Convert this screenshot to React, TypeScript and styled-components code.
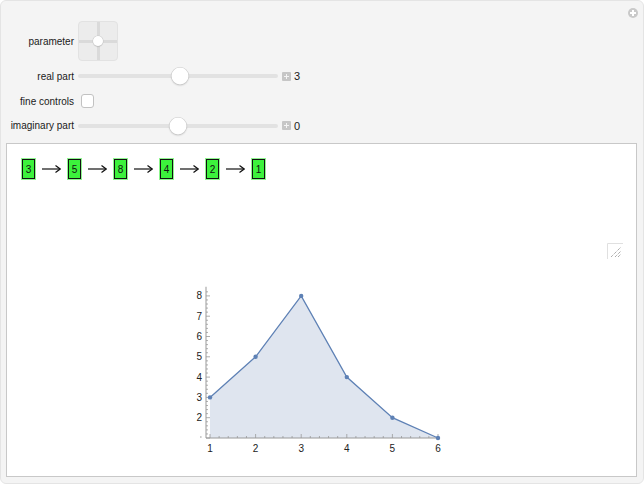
import { createGlobalStyle } from "styled-components";
import styled from "styled-components";

const GlobalStyle = createGlobalStyle`
  html, body {
    margin: 0;
    padding: 0;
    background: #ffffff;
  }
  body {
    font-family: "Liberation Sans", Arial, sans-serif;
    font-size: 11px;
    color: #1a1a1a;
  }
`;

const sequence = [3, 5, 8, 4, 2, 1];
const points: [number, number][] = [
  [1, 3],
  [2, 5],
  [3, 8],
  [4, 4],
  [5, 2],
  [6, 1],
];

// plot mapping (svg local coordinates)
const px = (u: number) => 25 + (u - 1) * 45.6;
const py = (v: number) => 153 - (v - 1) * 20.3;

const Panel = styled.div`
  width: 644px;
  height: 484px;
  box-sizing: border-box;
  background: #f4f4f4;
  border: 1px solid #e4e4e4;
  border-radius: 6px;
  display: flex;
  flex-direction: column;
`;

const TopBar = styled.div`
  display: flex;
  justify-content: flex-end;
  padding: 7px 5px 0 0;
  height: 13px;
`;

const CornerButton = styled.div`
  width: 10px;
  height: 10px;
  border-radius: 50%;
  background: #c9c9c9;
  position: relative;
  &::before,
  &::after {
    content: "";
    position: absolute;
    background: #fff;
  }
  &::before {
    left: 2px;
    top: 4px;
    width: 6px;
    height: 2px;
  }
  &::after {
    left: 4px;
    top: 2px;
    width: 2px;
    height: 6px;
  }
`;

const Controls = styled.div`
  display: grid;
  grid-template-columns: 73px auto;
  grid-template-rows: 40px 20px 20px 19px;
  column-gap: 4px;
  row-gap: 5px;
  align-items: center;
`;

const Label = styled.div`
  text-align: right;
  font-size: 10px;
  white-space: nowrap;
`;

const Pad = styled.div`
  width: 40px;
  height: 40px;
  box-sizing: border-box;
  border-radius: 4px;
  background: #ececec;
  border: 1px solid #e2e2e2;
  position: relative;
  &::before {
    content: "";
    position: absolute;
    left: 18px;
    top: 0;
    width: 3px;
    height: 38px;
    background: #dadada;
  }
  &::after {
    content: "";
    position: absolute;
    top: 18px;
    left: 0;
    height: 3px;
    width: 38px;
    background: #dadada;
  }
`;

const PadThumb = styled.div`
  position: absolute;
  left: 14px;
  top: 14px;
  width: 10px;
  height: 10px;
  border-radius: 50%;
  background: #fff;
  box-shadow: 0 0 0 0.5px #c8c8c8, 0 1px 1px rgba(0, 0, 0, 0.15);
  z-index: 1;
`;

const SliderRow = styled.div`
  display: flex;
  align-items: center;
`;

const Track = styled.div`
  width: 200px;
  height: 4px;
  border-radius: 2px;
  background: #e2e2e2;
  position: relative;
`;

const Thumb = styled.div<{ $pos: number }>`
  position: absolute;
  top: 50%;
  left: ${(p) => p.$pos * 100}%;
  width: 17px;
  height: 17px;
  border-radius: 50%;
  background: #fff;
  transform: translate(-50%, -50%);
  box-shadow: 0 0 0 0.5px #c4c4c4, 0 1px 2px rgba(0, 0, 0, 0.2);
`;

const PlusBox = styled.div`
  width: 9px;
  height: 9px;
  margin-left: 4px;
  background: #c6c6c6;
  border-radius: 1px;
  position: relative;
  &::before,
  &::after {
    content: "";
    position: absolute;
    background: #f4f4f4;
  }
  &::before {
    left: 2px;
    top: 4px;
    width: 5px;
    height: 1px;
  }
  &::after {
    left: 4px;
    top: 2px;
    width: 1px;
    height: 5px;
  }
`;

const Value = styled.span`
  margin-left: 3px;
  font-size: 11px;
`;

const Checkbox = styled.div`
  width: 13px;
  height: 14px;
  margin-left: 3px;
  box-sizing: border-box;
  border: 1px solid #c2c2c2;
  border-radius: 3px;
  background: #fff;
`;

const Output = styled.div`
  margin: 8px 6px 0 5px;
  height: 334px;
  box-sizing: border-box;
  background: #fff;
  border: 1px solid #c8c8c8;
  padding: 14px 13px 0 15px;
  display: flex;
  flex-direction: column;
`;

const Sequence = styled.div`
  display: flex;
  align-items: center;
  gap: 7px;
  height: 22px;
`;

const Step = styled.div`
  display: flex;
  align-items: center;
  gap: 7px;
`;

const Cell = styled.div`
  width: 13px;
  height: 20px;
  box-sizing: border-box;
  border: 1px solid #111;
  background: #3cf23c;
  box-shadow: 0 0 0 1px #8ef58e;
  display: flex;
  align-items: center;
  justify-content: center;
  font-size: 10px;
  color: #111;
`;

const ResizeRow = styled.div`
  display: flex;
  justify-content: flex-end;
  margin-top: 63px;
  height: 16px;
`;

const PlotWrap = styled.div`
  margin-top: 26px;
  margin-left: 163px;
`;

function Arrow() {
  return (
    <svg width="19" height="10" viewBox="0 0 19 10">
      <line x1="0" y1="5" x2="18" y2="5" stroke="#111" strokeWidth="1.2" />
      <path d="M13.5 1.5 L18.2 5 L13.5 8.5" fill="none" stroke="#111" strokeWidth="1.2" />
    </svg>
  );
}

function ResizeIcon() {
  return (
    <svg width="16" height="16" viewBox="0 0 16 16">
      <path d="M0.5 16 V0.5 H16" fill="none" stroke="#e0e0e0" strokeWidth="1" />
      <g stroke="#8a8a8a" strokeWidth="1" strokeDasharray="1 1">
        <line x1="4" y1="14" x2="14" y2="4" />
        <line x1="8" y1="14" x2="14" y2="8" />
        <line x1="11" y1="14" x2="14" y2="11" />
      </g>
    </svg>
  );
}

function Plot() {
  const line = points.map(([u, v]) => `${px(u)},${py(v)}`).join(" ");
  const area = `${px(1)},${py(1)} ${line} ${px(6)},${py(1)}`;
  const xMinor: number[] = [];
  for (let u = 0.8; u <= 6.01; u += 0.2) xMinor.push(u);
  const yMinor: number[] = [];
  for (let v = 1; v <= 8.31; v += 0.2) yMinor.push(v);
  const axisX = 21;
  const axisY = py(1);
  return (
    <svg width="265" height="170" viewBox="0 0 265 170">
      <polygon points={area} fill="#dfe5ef" />
      <line x1={axisX} y1={py(8.45)} x2={axisX} y2={axisY} stroke="#999" strokeWidth="1" />
      <line x1={axisX} y1={axisY} x2={px(6) + 2} y2={axisY} stroke="#999" strokeWidth="1" />
      {yMinor.map((v, i) => {
        const major = Math.abs(v - Math.round(v)) < 0.01;
        return (
          <line
            key={"y" + i}
            x1={axisX}
            x2={axisX + (major ? 4 : 2)}
            y1={py(v)}
            y2={py(v)}
            stroke="#999"
            strokeWidth="0.8"
          />
        );
      })}
      {xMinor.map((u, i) => {
        const major = Math.abs(u - Math.round(u)) < 0.01;
        return (
          <line
            key={"x" + i}
            x1={px(u)}
            x2={px(u)}
            y1={axisY}
            y2={axisY - (major ? 4 : 2)}
            stroke="#999"
            strokeWidth="0.8"
          />
        );
      })}
      <polyline points={line} fill="none" stroke="#5e81b5" strokeWidth="1.3" />
      {points.map(([u, v]) => (
        <circle key={u} cx={px(u)} cy={py(v)} r="2.2" fill="#5e81b5" />
      ))}
      <g fontFamily="Liberation Sans, Arial, sans-serif" fontSize="10" fill="#222">
        {[2, 3, 4, 5, 6, 7, 8].map((v) => (
          <text key={v} x={17} y={py(v) + 3.5} textAnchor="end">
            {v}
          </text>
        ))}
        {[1, 2, 3, 4, 5, 6].map((u) => (
          <text key={u} x={px(u)} y={axisY + 14} textAnchor="middle">
            {u}
          </text>
        ))}
      </g>
    </svg>
  );
}

export default function App() {
  return (
    <>
      <GlobalStyle />
      <Panel>
        <TopBar>
          <CornerButton />
        </TopBar>
        <Controls>
          <Label>parameter</Label>
          <Pad>
            <PadThumb />
          </Pad>
          <Label>real part</Label>
          <SliderRow>
            <Track>
              <Thumb $pos={0.51} />
            </Track>
            <PlusBox />
            <Value>3</Value>
          </SliderRow>
          <Label>fine controls</Label>
          <SliderRow>
            <Checkbox />
          </SliderRow>
          <Label>imaginary part</Label>
          <SliderRow>
            <Track>
              <Thumb $pos={0.5} />
            </Track>
            <PlusBox />
            <Value>0</Value>
          </SliderRow>
        </Controls>
        <Output>
          <Sequence>
            {sequence.map((n, i) => (
              <Step key={i}>
                {i > 0 && <Arrow />}
                <Cell>{n}</Cell>
              </Step>
            ))}
          </Sequence>
          <ResizeRow>
            <ResizeIcon />
          </ResizeRow>
          <PlotWrap>
            <Plot />
          </PlotWrap>
        </Output>
      </Panel>
    </>
  );
}
